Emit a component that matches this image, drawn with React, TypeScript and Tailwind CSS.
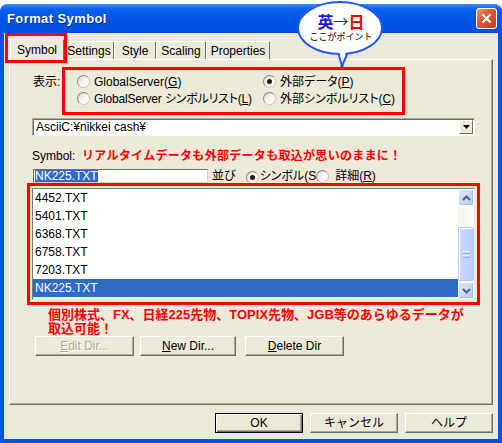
import type { ReactNode } from "react";

function Radio({ checked }: { checked?: boolean }) {
  return (
    <span className="inline-flex items-center justify-center w-[13px] h-[13px] shrink-0 rounded-full border border-t-[#8a8a8a] border-l-[#8a8a8a] border-r-[#c9c7bc] border-b-[#c9c7bc] bg-[linear-gradient(135deg,#d6d4ca_0%,#f4f3ee_45%,#ffffff_100%)]">
      {checked && <span className="w-[5px] h-[5px] rounded-full bg-[#1b1b1b]" />}
    </span>
  );
}

function Key({ k }: { k: string }) {
  return <span className="underline underline-offset-1">{k}</span>;
}

function ClassicButton({
  children,
  className = "",
  disabled,
  isDefault,
}: {
  children: ReactNode;
  className?: string;
  disabled?: boolean;
  isDefault?: boolean;
}) {
  return (
    <div
      className={
        "h-[20px] flex items-center justify-center text-[12px] bg-[#ECE9D8] border " +
        (isDefault
          ? "border-black shadow-[inset_1px_1px_0_#ffffff,inset_-1px_-1px_0_#716F64,inset_-2px_-2px_0_#ACA899] "
          : "border-t-white border-l-white border-r-[#716F64] border-b-[#716F64] shadow-[inset_-1px_-1px_0_#ACA899] ") +
        (disabled ? "text-[#ACA899] [text-shadow:1px_1px_0_#ffffff] " : "text-black ") +
        className
      }
    >
      {children}
    </div>
  );
}

function Tab({ label, w, selected }: { label: string; w: string; selected?: boolean }) {
  return (
    <div
      className={
        "flex items-center justify-center text-[12px] border-t border-l border-r border-t-white border-l-white border-r-[#716F64] bg-[#ECE9D8] " +
        w +
        (selected ? " h-[21px] relative z-10 -mb-[1px]" : " h-[18px] mt-[2px]")
      }
    >
      {label}
    </div>
  );
}

const FILES = ["4452.TXT", "5401.TXT", "6368.TXT", "6758.TXT", "7203.TXT", "NK225.TXT"];

function ScrollArrow({ up }: { up?: boolean }) {
  return (
    <div className="h-[17px] rounded-[2px] border border-white bg-[linear-gradient(135deg,#dbe5fd,#b9cbf8)] flex items-center justify-center shadow-[inset_-1px_-1px_0_#a8bdf0]">
      <svg width="9" height="6" viewBox="0 0 9 6">
        <path
          d={up ? "M1 5 L4.5 1.5 L8 5" : "M1 1 L4.5 4.5 L8 1"}
          fill="none"
          stroke="#4D6185"
          strokeWidth="2"
        />
      </svg>
    </div>
  );
}

export default function App() {
  return (
    <div className="relative w-[502px] h-[443px] bg-white overflow-hidden font-['Liberation_Sans','Noto_Sans_CJK_JP',sans-serif] text-black">
      <div className="mt-[4px] h-[439px] rounded-t-[8px] bg-[#0054E3] flex flex-col">
        {/* title bar */}
        <div className="h-[29px] shrink-0 rounded-t-[8px] flex items-center pl-[7px] pr-[5px] bg-[linear-gradient(180deg,#3C8CF8_0%,#0A5FEE_18%,#0055E5_60%,#0050DE_100%)]">
          <span className="text-white font-bold text-[13px] tracking-[0.4px] [text-shadow:1px_1px_0_#0a2a8a]">
            Format Symbol
          </span>
          <div className="ml-auto w-[21px] h-[21px] rounded-[3px] border border-white bg-[linear-gradient(135deg,#EE9A7C_0%,#DB5530_45%,#C63E18_100%)] flex items-center justify-center">
            <svg width="11" height="11" viewBox="0 0 11 11">
              <path d="M1.5 1.5 L9.5 9.5 M9.5 1.5 L1.5 9.5" stroke="white" strokeWidth="2.2" />
            </svg>
          </div>
        </div>

        {/* client area */}
        <div className="relative mx-[4px] mb-[4px] flex-1 bg-[#ECE9D8] flex flex-col">
          <div className="mt-[6px] ml-[6px] h-[20px] flex items-start">
            <Tab label="Symbol" w="w-[54px]" selected />
            <Tab label="Settings" w="w-[50px]" />
            <Tab label="Style" w="w-[42px]" />
            <Tab label="Scaling" w="w-[50px]" />
            <Tab label="Properties" w="w-[64px]" />
          </div>

          {/* tab panel */}
          <div className="ml-[5px] w-[484px] h-[346px] border border-t-white border-l-white border-r-[#716F64] border-b-[#716F64] shadow-[inset_-1px_-1px_0_#ACA899] flex flex-col">
            {/* display radios */}
            <div className="mt-[7px] pl-[23px] flex items-start">
              <span className="w-[29px] mt-[8px] text-[12px] leading-[14px]">表示:</span>
              <div className="w-[343px] h-[48px] border-[3px] border-[#FF0000] pt-[3px] pl-[12px] grid grid-cols-[186px_1fr] auto-rows-[17px] text-[12px] whitespace-nowrap [font-feature-settings:'palt']">
                <div className="flex items-center gap-[4px]">
                  <Radio />
                  <span>
                    GlobalServer(<Key k="G" />)
                  </span>
                </div>
                <div className="flex items-center gap-[4px]">
                  <Radio checked />
                  <span>
                    外部データ(<Key k="P" />)
                  </span>
                </div>
                <div className="flex items-center gap-[4px]">
                  <Radio />
                  <span className="tracking-[-0.2px]">
                    GlobalServer シンボルリスト(<Key k="L" />)
                  </span>
                </div>
                <div className="flex items-center gap-[4px]">
                  <Radio />
                  <span>
                    外部シンボルリスト(<Key k="C" />)
                  </span>
                </div>
              </div>
            </div>

            {/* combo */}
            <div className="mt-[3px] ml-[22px] w-[443px] h-[18px] bg-white border border-t-[#ACA899] border-l-[#ACA899] border-r-white border-b-white shadow-[inset_1px_1px_0_#716F64] flex items-center">
              <span className="pl-[3px] text-[12px] flex-1">AsciiC:¥nikkei cash¥</span>
              <div className="mr-[1px] w-[14px] h-[14px] bg-[#ECE9D8] border border-t-white border-l-white border-r-[#716F64] border-b-[#716F64] flex items-center justify-center">
                <svg width="7" height="4" viewBox="0 0 7 4">
                  <path d="M0 0 H7 L3.5 4 Z" fill="black" />
                </svg>
              </div>
            </div>

            {/* symbol label + note */}
            <div className="mt-[13px] pl-[22px] h-[14px] flex items-center leading-[14px]">
              <span className="w-[50px] text-[12px]">Symbol:</span>
              <span className="text-[12px] font-bold text-[#FF0000] whitespace-nowrap tracking-[0.3px]">
                リアルタイムデータも外部データも取込が思いのままに！
              </span>
            </div>

            {/* input row */}
            <div className="mt-[6px] pl-[23px] h-[14px] flex items-center text-[12px] whitespace-nowrap [font-feature-settings:'palt']">
              <div className="w-[175px] h-[14px] bg-white border border-t-[#716F64] border-l-[#716F64] border-r-[#D4D0C8] border-b-[#D4D0C8] flex items-center pl-[1px]">
                <span className="bg-[#316AC5] text-white leading-[12px]">NK225.TXT</span>
              </div>
              <span className="ml-[4px]">並び</span>
              <span className="ml-[10px]">
                <Radio checked />
              </span>
              <span className="ml-[1px]">シンボル(S</span>
              <Radio />
              <span className="ml-[6px]">
                詳細(<Key k="R" />)
              </span>
            </div>

            {/* file list with red frame */}
            <div className="ml-[17px] w-[453px] h-[122px] border-[3px] border-[#FF0000] p-[2px]">
              <div className="h-full bg-white border border-t-[#7A7A7A] border-l-[#7A7A7A] border-r-[#F1EFE2] border-b-[#F1EFE2] flex">
                <div className="flex-1 flex flex-col text-[12px]">
                  {FILES.map((f) => (
                    <div
                      key={f}
                      className={
                        "h-[18px] leading-[18px] pl-[2px] " +
                        (f === "NK225.TXT" ? "bg-[#316AC5] text-white" : "")
                      }
                    >
                      {f}
                    </div>
                  ))}
                </div>
                <div className="w-[16px] flex flex-col bg-[linear-gradient(90deg,#F3F1EC,#FEFEFB)]">
                  <ScrollArrow up />
                  <div className="h-[21px]" />
                  <div className="flex-1 rounded-[2px] border border-[#B5C8F5] bg-[linear-gradient(90deg,#CAD8FD,#BCCDF9)] flex flex-col items-center justify-center gap-[1px] shadow-[inset_1px_1px_0_#ffffff]">
                    <span className="w-[7px] h-[1px] bg-[#EEF3FE]" />
                    <span className="w-[7px] h-[1px] bg-[#8CB0F8]" />
                    <span className="w-[7px] h-[1px] bg-[#EEF3FE]" />
                    <span className="w-[7px] h-[1px] bg-[#8CB0F8]" />
                  </div>
                  <div className="h-[1px]" />
                  <ScrollArrow />
                </div>
              </div>
            </div>

            {/* red note */}
            <div className="mt-[3px] ml-[38px] text-[13px] leading-[14px] font-bold text-[#FF0000] whitespace-nowrap">
              個別株式、FX、日経225先物、TOPIX先物、JGB等のあらゆるデータが
              <br />
              取込可能！
            </div>

            {/* dir buttons */}
            <div className="ml-[25px] flex">
              <ClassicButton className="w-[99px]" disabled>
                <span>
                  <Key k="E" />
                  dit Dir...
                </span>
              </ClassicButton>
              <ClassicButton className="w-[96px] ml-[6px]">
                <span>
                  <Key k="N" />
                  ew Dir...
                </span>
              </ClassicButton>
              <ClassicButton className="w-[99px] ml-[9px]">
                <span>
                  <Key k="D" />
                  elete Dir
                </span>
              </ClassicButton>
            </div>
          </div>

          {/* dialog buttons */}
          <div className="mt-[8px] pr-[5px] flex justify-end gap-[7px]">
            <ClassicButton className="w-[88px]" isDefault>
              OK
            </ClassicButton>
            <ClassicButton className="w-[88px]">キャンセル</ClassicButton>
            <ClassicButton className="w-[88px]">ヘルプ</ClassicButton>
          </div>

          {/* red highlight around the Symbol tab */}
          <div className="absolute left-[1px] top-0 w-[62px] h-[30px] border-[3px] border-[#FF0000] z-20" />
        </div>
      </div>

      {/* speech bubble */}
      <div className="absolute left-[294px] top-0 w-[94px] h-[70px] z-30">
        <svg width="94" height="70" viewBox="0 0 94 70" className="absolute inset-0">
          <path
            d="M44 52 L48 66 L54 52"
            fill="white"
            stroke="#1E5BFF"
            strokeWidth="2"
            strokeLinejoin="round"
          />
          <ellipse cx="46" cy="28" rx="42" ry="26" fill="white" stroke="#1E5BFF" strokeWidth="2" />
          <path d="M45 50 L48 62 L53 50 Z" fill="white" />
          <circle cx="48" cy="66" r="1.6" fill="#1E5BFF" />
        </svg>
        <div className="absolute left-0 right-0 top-[13px] flex flex-col items-center">
          <div className="flex items-center text-[16px] leading-[16px] font-bold font-['Noto_Sans_CJK_JP',sans-serif]">
            <span className="text-[#1A1AF0]">英</span>
            <span className="text-[#333] font-normal text-[15px]">→</span>
            <span className="text-[#FF0000]">日</span>
          </div>
          <div className="mt-[3px] text-[9px] leading-[10px] font-['Noto_Sans_CJK_JP',sans-serif]">ここがポイント</div>
        </div>
      </div>
    </div>
  );
}
